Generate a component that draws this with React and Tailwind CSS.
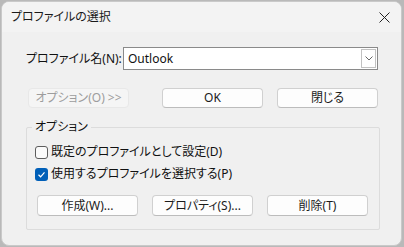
import React from 'react'

const font = { fontFamily: '"Noto Sans", "Noto Sans CJK JP", sans-serif' }

const Btn = ({ children, className = '', disabled }) => (
  <div
    className={`flex items-center justify-center h-[20px] w-[101px] rounded-[4px] text-[12px] leading-none whitespace-nowrap ${
      disabled
        ? 'bg-[#f5f5f5] border border-[#e8e8e8] text-[#9d9d9d]'
        : 'bg-[#fdfdfd] border border-[#d0d0d0] border-b-[#bcbcbc] text-[#1b1b1b]'
    } ${className}`}
  >
    {children}
  </div>
)

const Check = ({ checked, label }) => (
  <div className="flex items-center h-[14px]">
    {checked ? (
      <div className="w-[13px] h-[13px] rounded-[3px] bg-[#005fb8] flex items-center justify-center">
        <svg width="9" height="9" viewBox="0 0 9 9">
          <path d="M1.5 4.8 L3.6 6.8 L7.5 2.4" fill="none" stroke="#fff" strokeWidth="1.2" />
        </svg>
      </div>
    ) : (
      <div className="w-[13px] h-[13px] rounded-[3px] border border-[#5d5d5d] bg-[#fafafa]" />
    )}
    <span className="ml-[3px] text-[12px] text-[#111] whitespace-nowrap">{label}</span>
  </div>
)

export default function App() {
  return (
    <div className="w-[404px] h-[247px] bg-[#b9b9b9] pt-px pl-px [font-feature-settings:'palt']" style={font}>
      <div className="w-[401px] h-[245px] rounded-[8px] border border-[#c9c9c9] bg-[#f0f0f0] overflow-hidden flex flex-col">
        {/* Title bar */}
        <div className="h-[30px] bg-[#f3f3f3] flex items-center justify-between pl-[9px] pr-[11px]">
          <span className="text-[12px] text-[#1a1a1a]">プロファイルの選択</span>
          <svg width="11" height="11" viewBox="0 0 11 11">
            <path d="M0.5 0.5 L10.5 10.5 M10.5 0.5 L0.5 10.5" stroke="#222" strokeWidth="1" />
          </svg>
        </div>

        {/* Body */}
        <div className="flex flex-col pl-[24px] pr-[23px]">
          {/* Profile name row */}
          <div className="flex items-center mt-[15px] h-[23px]">
            <span className="text-[12px] text-[#111] w-[97px] shrink-0 whitespace-nowrap">プロファイル名(N):</span>
            <div className="flex-1 h-[23px] bg-white border border-[#8a8a8a] flex items-center justify-between pl-[4px] pr-px">
              <span className="text-[12px] text-[#111]">Outlook</span>
              <div className="w-[15px] h-[19px] border border-[#c2c2c2] flex items-center justify-center">
                <svg width="8" height="5" viewBox="0 0 8 5">
                  <path d="M0.5 0.5 L4 4 L7.5 0.5" fill="none" stroke="#666" strokeWidth="1" />
                </svg>
              </div>
            </div>
          </div>

          {/* Action buttons */}
          <div className="flex items-center mt-[18px]">
            <Btn disabled className="ml-[2px]">オプション(O) &gt;&gt;</Btn>
            <Btn className="ml-[33px]">OK</Btn>
            <Btn className="ml-[14px]">閉じる</Btn>
          </div>

          {/* Options group */}
          <div className="relative mt-[19px] w-[354px] h-[103px] border border-[#dcdcdc] rounded-[2px] flex flex-col pl-[8px] pt-[17px]">
            <span className="absolute -top-[9px] left-[5px] px-[3px] bg-[#f0f0f0] text-[12px] text-[#111] leading-[16px]">
              オプション
            </span>
            <Check label="既定のプロファイルとして設定(D)" />
            <div className="mt-[8px]">
              <Check checked label="使用するプロファイルを選択する(P)" />
            </div>
            <div className="flex items-center mt-[14px] pl-[2px]">
              <Btn className="h-[21px]">作成(W)...</Btn>
              <Btn className="h-[21px] ml-[14px]">プロパティ(S)...</Btn>
              <Btn className="h-[21px] ml-[14px]">削除(T)</Btn>
            </div>
          </div>
        </div>
      </div>
    </div>
  )
}
